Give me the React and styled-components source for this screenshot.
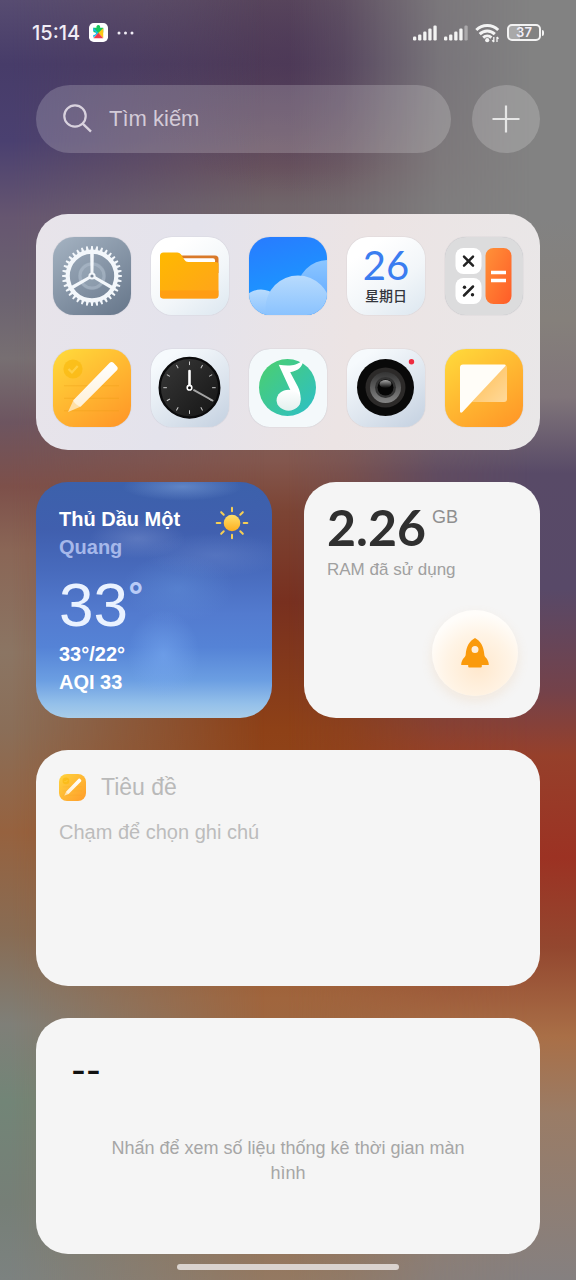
import React from "react";
import styled, { createGlobalStyle } from "styled-components";

const GlobalStyle = createGlobalStyle`
  * { box-sizing: border-box; }
  html { min-height: 100%; background: #7f6b62; }
  body { margin: 0; font-family: "Liberation Sans", "Noto Sans", "Noto Sans CJK SC", sans-serif; }
  button { font: inherit; color: inherit; border: 0; padding: 0; background: none; cursor: pointer; }
  svg { display: block; }
`;

const Screen = styled.div`
  position: relative;
  isolation: isolate;
  overflow: hidden;
  min-height: 100vh;
  display: flex;
  flex-direction: column;
  padding: 0 36px;
  background:
    radial-gradient(ellipse 30% 10% at 52% 5%, rgba(75, 54, 86, 0.6), rgba(75, 54, 86, 0)),
    linear-gradient(#5c4a5e 0, #503d59 5%, #6a545e 13%, #70656a 16%, #7c6462 30%, #83574e 36%,
      #7c4434 40%, #78301f 47%, #8e4117 57%, #93481c 66%, #a0653d 78%, #986c4a 88%, #947962 100%);
`;

const SideTint = styled.div`
  position: absolute;
  inset: 0;
  z-index: -1;
  background: ${(p) =>
    p.$right
      ? `linear-gradient(#828282 0, #828282 17%, #85807b 25%, #80757a 31%, #584a67 37%, #584968 46%,
         #74424a 54%, #96402b 59%, #9c3223 67%, #93472f 74%, #a96f47 81%, #9a7c66 87%, #858080 100%)`
      : `linear-gradient(#574c71 0, #473c69 5%, #4a4070 11%, #665670 17%, #6b6270 23%, #776f72 28%,
         #6d5560 33%, #7d504a 38%, #8a6656 43%, #8b7563 51%, #8a6e58 57%, #96623f 65%, #886c54 73%,
         #7f7f78 80%, #728577 86%, #767f77 94%, #7c8280 100%)`};
  mask-image: ${(p) =>
    p.$right
      ? "linear-gradient(to left, #000 8%, rgba(0, 0, 0, 0.8) 24%, rgba(0, 0, 0, 0.2) 40%, transparent 50%)"
      : "linear-gradient(to right, #000 2%, transparent 46%)"};
`;

const StatusBar = styled.header`
  display: flex;
  align-items: center;
  justify-content: space-between;
  height: 65px;
  margin: 0 -4px;
  color: #f1edf6;
  font-family: Inter, sans-serif;
`;

const StatusGroup = styled.div`
  display: flex;
  align-items: center;
  gap: ${(p) => p.$gap}px;
`;

const Clock = styled.time`
  font-size: 20px;
  font-weight: 500;
  line-height: 24px;
`;

const SearchRow = styled.form`
  display: flex;
  gap: 21px;
  margin: 20px 0 61px;
`;

const SearchBox = styled.label`
  flex: 1;
  min-width: 0;
  height: 68px;
  display: flex;
  align-items: center;
  gap: 16px;
  padding: 0 27px;
  border-radius: 34px;
  background: rgba(255, 255, 255, 0.19);
  color: #d9d2de;
`;

const SearchInput = styled.input`
  flex: 1;
  min-width: 0;
  border: 0;
  outline: 0;
  padding: 0;
  background: none;
  font: 400 22px/28px "Liberation Sans", "Noto Sans", sans-serif;
  color: inherit;
  &::placeholder { color: #d3cbd8; opacity: 1; }
`;

const AddButton = styled.button`
  width: 68px;
  height: 68px;
  display: grid;
  place-items: center;
  border-radius: 50%;
  background: rgba(255, 255, 255, 0.19);
`;

const Widgets = styled.main`
  display: flex;
  flex-direction: column;
  gap: 32px;
`;

const AppPanel = styled.nav`
  display: grid;
  grid-template-columns: repeat(5, 78px);
  justify-content: space-between;
  row-gap: 34px;
  padding: 23px 17px;
  border-radius: 32px;
  background: linear-gradient(100deg, #e8e4ea 0, #e4e3ec 30%, #ece4e4 62%, #e9e7e8 100%);
`;

const AppTile = styled.button`
  width: 78px;
  height: 78px;
  overflow: hidden;
  border-radius: 21px;
  background: ${(p) => p.$bg};
  box-shadow: 0 0 1px rgba(70, 80, 100, 0.35);
`;

const CalendarFace = styled.span`
  height: 100%;
  display: flex;
  flex-direction: column;
  align-items: center;
  padding-top: 8px;
`;

const CalendarDay = styled.span`
  font: 400 40px/40px Lato, sans-serif;
  color: #3a7df0;
`;

const CalendarWeekday = styled.span`
  font: 500 14px/20px "Noto Sans CJK SC", sans-serif;
  color: #34373d;
`;

const Pair = styled.div`
  display: grid;
  grid-template-columns: 1fr 1fr;
  gap: 32px;
`;

const Card = styled.button`
  display: flex;
  flex-direction: column;
  width: 100%;
  min-height: 236px;
  padding: 23px 23px 22px;
  border-radius: 32px;
  background: #f5f5f5;
  text-align: left;
`;

const WeatherCard = styled(Card)`
  color: #fff;
  background:
    radial-gradient(ellipse 36px 44px at 54% 73%, rgba(125, 175, 245, 0.5), transparent),
    radial-gradient(ellipse 56px 34px at 60% 45%, rgba(105, 155, 225, 0.35), transparent),
    radial-gradient(ellipse 60px 14px at 62% 2%, rgba(150, 185, 235, 0.4), transparent),
    radial-gradient(ellipse 48px 20px at 43% 24%, rgba(150, 170, 220, 0.3), transparent),
    radial-gradient(ellipse 70px 22px at 76% 31%, rgba(130, 155, 215, 0.25), transparent),
    linear-gradient(#3c61ab 0, #405fae 20%, #486bbd 38%, #537bcf 56%, #5583d6 70%, #6b9ee2 84%, #94c0ea 94%, #a9cde9 100%);
`;

const WeatherTop = styled.span`
  display: flex;
  justify-content: space-between;
`;

const Stack = styled.span`
  display: flex;
  flex-direction: column;
`;

const WeatherLine = styled.span`
  font-size: 20px;
  font-weight: 700;
  line-height: 28px;
  color: ${(p) => (p.$muted ? "#a6b8ea" : "#fff")};
`;

const Temperature = styled.span`
  display: flex;
  margin: 12px 0 3px;
  font-size: 62px;
  line-height: 64px;
  color: #eaf2ff;
`;

const Degree = styled.span`
  font: 600 34px/44px Inter, sans-serif;
  color: #b9cbf6;
`;

const RamTop = styled.span`
  display: flex;
  gap: 6px;
  height: 53px;
`;

const RamValue = styled.span`
  font: 700 50px/44px Lato, sans-serif;
  color: #303030;
`;

const RamUnit = styled.span`
  font-size: 18px;
  line-height: 24px;
  color: #8f8f8f;
`;

const RamLabel = styled.span`
  font-size: 17px;
  line-height: 24px;
  color: #a0a0a0;
`;

const BoostDisc = styled.span`
  width: 86px;
  height: 86px;
  display: grid;
  place-items: center;
  align-self: flex-end;
  margin: auto 0 0;
  border-radius: 50%;
  background: radial-gradient(circle at 54% 66%, #ffe8cd 0, #fff4e6 45%, #fffdfa 72%);
  box-shadow: 0 5px 12px rgba(230, 165, 100, 0.16);
`;

const RamCard = styled(Card)`
  padding-right: 22px;
`;

const NoteHeader = styled.span`
  display: flex;
  align-items: center;
  gap: 15px;
  height: 28px;
  margin-bottom: 17px;
  font-size: 23px;
  color: #b9b9b9;
`;

const NoteHint = styled.span`
  font-size: 20px;
  line-height: 28px;
  color: #bcbcbc;
`;

const MiniIcon = styled.span`
  width: 27px;
  height: 27px;
  overflow: hidden;
  border-radius: 8px;
  background: linear-gradient(135deg, #ffd43d, #ff9c2b);
`;

const UsageCard = styled(Card)`
  padding: 35px;
`;

const UsageTime = styled.span`
  height: 83px;
  font: 600 32px/36px Inter, sans-serif;
  color: #111;
`;

const UsageHint = styled.span`
  align-self: center;
  max-width: 380px;
  font-size: 18px;
  line-height: 25px;
  text-align: center;
  color: #a6a6a6;
`;

const HomeBar = styled.div`
  align-self: center;
  width: 222px;
  height: 6px;
  margin: 10px 0;
  border-radius: 3px;
  background: #dad3cf;
`;

const Icon = ({ size = 78, h, box = "0 0 78 78", children }) => (
  <svg width={size} height={h || size} viewBox={box} fill="none" aria-hidden="true">
    {children}
  </svg>
);

const Grad = ({ id, from, to, vertical }) => (
  <linearGradient id={id} x1="0" y1="0" x2={vertical ? "0" : "1"} y2="1">
    <stop stopColor={from} />
    <stop offset="1" stopColor={to} />
  </linearGradient>
);

const spin = (count, cx, cy, draw) =>
  Array.from({ length: count }, (_, i) => (
    <g key={i} transform={`rotate(${(i * 360) / count} ${cx} ${cy})`}>{draw}</g>
  ));

const SettingsIcon = () => (
  <Icon>
    <circle cx="39" cy="39" r="14" fill="#a9b8c8" opacity=".3" />
    <circle cx="39" cy="39" r="12" stroke="#b9c6d4" strokeWidth="3" opacity=".4" />
    <circle cx="39" cy="39" r="24.3" stroke="#f3f7fb" strokeWidth="4.2" />
    {spin(36, 39, 39, <path d="M37.500 14l.7-5h1.600l.7 5z" fill="#f3f7fb" />)}
    {spin(3, 39, 39, <path d="M37.600 39L37.200 16h3.600l-.4 23z" fill="#f3f7fb" />)}
    <circle cx="39" cy="39" r="3.600" fill="#f3f7fb" />
    <circle cx="39" cy="39" r="1.600" fill="#7b899a" />
  </Icon>
);

const FolderIcon = () => (
  <Icon>
    <defs><Grad id="folder" from="#ffb900" to="#ffa31c" /></defs>
    <path d="M29 18.500h35a3.500 3.500 0 0 1 3.500 3.500v14H29z" fill="#d9792a" />
    <path d="M30 21.300h32a2 2 0 0 1 2 2V30H32z" fill="#fff" />
    <path d="M9 19a3.500 3.500 0 0 1 3.500-3.500h13.800a5 5 0 0 1 3.600 1.800l3.500 5.400a4.500 4.500 0 0 0 3.800 2.200H65a2.500 2.500 0 0 1 2.500 2.500V58a3.500 3.500 0 0 1-3.500 3.500H12.500A3.500 3.500 0 0 1 9 58z" fill="url(#folder)" />
    <path d="M9 53.500h58.500V58a3.500 3.500 0 0 1-3.500 3.500H12.500A3.500 3.500 0 0 1 9 58z" fill="#ff9914" opacity=".75" />
  </Icon>
);

const SkyIcon = () => (
  <Icon>
    <defs>
      <Grad id="cloudBack" from="#8cc6ff" to="#4f9dff" vertical />
      <Grad id="cloudFront" from="#b8dbfd" to="#6db3ff" vertical />
    </defs>
    <circle cx="79" cy="54" r="31" fill="url(#cloudBack)" />
    <circle cx="12" cy="73" r="20.500" fill="url(#cloudFront)" />
    <circle cx="49" cy="71" r="32.500" fill="url(#cloudFront)" />
  </Icon>
);

const CalculatorIcon = () => (
  <Icon>
    <defs><Grad id="calc" from="#ff9238" to="#ff5c28" /></defs>
    <rect x="10.500" y="11" width="26" height="26" rx="8" fill="#fff" />
    <rect x="10.500" y="41" width="26" height="26" rx="8" fill="#fff" />
    <rect x="40.500" y="11" width="26" height="56" rx="8" fill="url(#calc)" />
    <path d="M19 19.700l9 9m0-9l-9 9M19 58.500l9-9" stroke="#222" strokeWidth="2.500" strokeLinecap="round" />
    <circle cx="19.500" cy="50.300" r="1.700" fill="#222" />
    <circle cx="27.500" cy="57.800" r="1.700" fill="#222" />
    <path d="M46 35.500h15M46 43.500h15" stroke="#fff" strokeWidth="3.400" />
  </Icon>
);

const NotesIcon = ({ size, id = "pencil" }) => (
  <Icon size={size}>
    <defs><Grad id={id} from="#ffffff" to="#fff1d8" vertical /></defs>
    <circle cx="20" cy="20" r="9.600" fill="#f9b90c" opacity=".65" />
    <path d="M15.500 20l3.400 3.400 5.800-6.400" stroke="#ffcf45" strokeWidth="2.200" />
    <path d="M11 36.800h55M11 49.300h55M11 61.800h55" stroke="#e99a10" strokeWidth="1" opacity=".35" />
    <path d="M15 63l5.500-12 7.500 6.500z" fill="#ffe0a8" />
    <path d="M20.300 51.300L56.500 14a3 3 0 0 1 4.200 0l3 3.200a3 3 0 0 1 0 4.200L27.800 57.600c-2.300-.2-6.800-3.500-7.500-6.300z" fill={`url(#${id})`} />
  </Icon>
);

const ClockIcon = () => (
  <Icon>
    <defs><Grad id="dial" from="#383838" to="#151515" /></defs>
    <circle cx="38.500" cy="38.700" r="29.800" fill="url(#dial)" stroke="#0b0b0c" strokeWidth="2.400" />
    {spin(12, 38.5, 38.7, <path d="M38.500 12.500v3.600" stroke="#c9c9c9" strokeWidth="1" />)}
    <path d="M38.500 22v14" stroke="#fff" strokeWidth="2.600" strokeLinecap="round" />
    <path d="M43 41.200L61.500 51.500" stroke="#a5a5a5" strokeWidth="2" strokeLinecap="round" />
    <circle cx="38.500" cy="38.700" r="2.300" stroke="#fff" strokeWidth="1.600" fill="#111" />
  </Icon>
);

const MusicIcon = () => (
  <Icon>
    <defs>
      <Grad id="disc" from="#4ccf6c" to="#2cbfc9" />
      <Grad id="noteHead" from="#ffffff" to="#e3f0ee" vertical />
    </defs>
    <circle cx="38.500" cy="38.500" r="28.500" fill="url(#disc)" />
    <path d="M29.700 15.800c6.500 1 12.500 1.200 16.800-.3 3.500-1.100 5.500-2.600 7.300-5 .4 7.500-4.300 11-12.600 12.700l7.600 14.300c2 4 3 8 2.800 13.200L39 51l2.300-10z" fill="#fff" />
    <ellipse cx="39.600" cy="51.200" rx="12" ry="10.500" fill="url(#noteHead)" />
  </Icon>
);

const CameraIcon = () => (
  <Icon>
    <defs>
      <Grad id="ring" from="#343434" to="#858585" vertical />
      <Grad id="lens" from="#d0d0d0" to="#060606" vertical />
    </defs>
    <circle cx="38.500" cy="38.500" r="28.500" fill="#090909" />
    <circle cx="38.500" cy="38.500" r="20" fill="#2c2a29" />
    <circle cx="38.500" cy="38.500" r="15.500" fill="url(#ring)" />
    <circle cx="38.500" cy="38.500" r="10.500" fill="#333" />
    <circle cx="38.500" cy="38.500" r="8" fill="#050505" />
    <ellipse cx="38.500" cy="35" rx="6" ry="4" fill="url(#lens)" opacity=".8" />
    <circle cx="64.500" cy="12.700" r="2.700" fill="#ee2b3f" />
  </Icon>
);

const MemoIcon = () => (
  <Icon>
    <defs><Grad id="memo" from="#ffbd50" to="#ffd99a" /></defs>
    <path d="M60.500 16a3 3 0 0 1 1.500 2.500V50a3 3 0 0 1-3 3H27z" fill="url(#memo)" />
    <path d="M15 18.500a3 3 0 0 1 3-3h41.500c1.300 0 1.500.8.700 1.700L17.500 63c-1.300 1.300-2.500.8-2.500-.7z" fill="#fffdf8" />
  </Icon>
);

const CalendarIcon = () => (
  <CalendarFace>
    <CalendarDay>26</CalendarDay>
    <CalendarWeekday>星期日</CalendarWeekday>
  </CalendarFace>
);

const pale = "linear-gradient(145deg, #ffffff 20%, #f2f6f9 60%, #dce7f0)";
const silver = "linear-gradient(145deg, #f6fafd 15%, #dde5ee 60%, #c3d0e0)";
const amber = "linear-gradient(145deg, #ffd83a 5%, #ffb731 50%, #ff9426)";

const apps = [
  { name: "Cài đặt", bg: "linear-gradient(145deg, #a5b3c2, #66768a)", Art: SettingsIcon },
  { name: "Tệp", bg: pale, Art: FolderIcon },
  { name: "Thời tiết", bg: "linear-gradient(165deg, #287bff, #1d93ff 60%)", Art: SkyIcon },
  { name: "Lịch", bg: pale, Art: CalendarIcon },
  { name: "Máy tính", bg: "#dcdcdd", Art: CalculatorIcon },
  { name: "Ghi chú", bg: amber, Art: NotesIcon },
  { name: "Đồng hồ", bg: silver, Art: ClockIcon },
  { name: "Nhạc", bg: "#f4f9fb", Art: MusicIcon },
  { name: "Máy ảnh", bg: silver, Art: CameraIcon },
  { name: "Ghi nhớ", bg: amber, Art: MemoIcon },
];

const PuzzleBadge = () => (
  <Icon size={19} box="0 0 20 20">
    <rect width="20" height="20" rx="5" fill="#fff" />
    <path d="M4.500 5H8a2 2 0 1 1 3.600 0H15v5l-5 1-5.500-1.500a1.700 1.700 0 0 0 0-2z" fill="#16c75b" />
    <path d="M4.500 4.800L10 10.500l-5.500 5v-3.200a2 2 0 1 0 0-3.600z" fill="#15b8ee" />
    <path d="M15 5.200v10.500l-5.300-5.200z" fill="#fbc516" />
    <path d="M4.800 16l5-5.700L15 16z" fill="#f23c4b" />
  </Icon>
);

const Signal = ({ weak }) => (
  <Icon size={24} h={16} box="0 0 24 16">
    {[4, 6, 9, 12, 15].map((h, i) => (
      <rect key={h} x={i * 5.1} y={15.5 - h} width="3.300" height={h} rx="1.200" fill="#f3f3f3" opacity={weak && i === 4 ? 0.4 : 1} />
    ))}
  </Icon>
);

const Wifi = () => (
  <Icon size={25} h={20} box="0 0 25 20">
    <path d="M1.300 7a15.500 15.500 0 0 1 21.900 0M4.700 11.100a10.700 10.700 0 0 1 15.100 0M8.200 14.600a6 6 0 0 1 8.200 0" stroke="#f3f3f3" strokeWidth="2.900" />
    <circle cx="12.200" cy="17.200" r="2.100" fill="#f3f3f3" />
    <path d="M18.800 14v5m-1.600-1.700l1.600 1.700M22 19v-5m0 0l1.500 1.700" stroke="#f3f3f3" strokeWidth="1.300" />
  </Icon>
);

const BatteryShell = styled.span`
  display: flex;
  align-items: center;
  gap: 1px;
  &::after { content: ""; width: 2px; height: 6px; border-radius: 0 2px 2px 0; background: #f3f3f3; }
`;

const BatteryLevel = styled.span`
  width: 34px;
  height: 17px;
  border: 2px solid #f3f3f3;
  border-radius: 5px;
  background: linear-gradient(to right, #a9a9a9 37%, transparent 37%);
  font-size: 13px;
  font-weight: 600;
  line-height: 13px;
  text-align: center;
`;

const SunIcon = () => (
  <Icon size={34} box="0 0 34 34">
    <defs><Grad id="sun" from="#ffe06b" to="#fdae1f" vertical /></defs>
    <circle cx="17" cy="17" r="8.300" fill="url(#sun)" />
    {spin(8, 17, 17, <path d="M17 1.700v3.600" stroke="#f6cf55" strokeWidth="2" strokeLinecap="round" />)}
  </Icon>
);

const SunSlot = styled.span`
  padding: 1px 0;
`;

const RocketIcon = () => (
  <Icon size={28} h={30} box="0 0 28 30">
    <path fillRule="evenodd" d="M14 0c5.200 2.800 8.700 8 9.300 16.500.1 1.200.4 2 1.400 3 2 2 3.100 4.500 3.100 7.500h-7v1.600a1 1 0 0 1-1 1H8.200a1 1 0 0 1-1-1V27h-7c0-3 1.100-5.500 3.100-7.500 1-1 1.300-1.800 1.400-3C5.300 8 8.800 2.800 14 0zm0 8a3.500 3.500 0 1 0 0 7 3.500 3.500 0 0 0 0-7z" fill="#fa9a0c" />
  </Icon>
);

export default function App() {
  return (
    <Screen>
      <GlobalStyle />
      <SideTint />
      <SideTint $right />

      <StatusBar>
        <StatusGroup $gap={9}>
          <Clock>15:14</Clock>
          <PuzzleBadge />
          <Icon size={17} h={4} box="0 0 17 4">
            {[2, 8.5, 15].map((x) => <circle key={x} cx={x} cy="2" r="1.500" fill="#f1edf6" />)}
          </Icon>
        </StatusGroup>
        <StatusGroup $gap={7}>
          <Signal />
          <Signal weak />
          <Wifi />
          <BatteryShell><BatteryLevel>37</BatteryLevel></BatteryShell>
        </StatusGroup>
      </StatusBar>

      <SearchRow onSubmit={(e) => e.preventDefault()}>
        <SearchBox>
          <Icon size={30} box="0 0 30 30">
            <circle cx="12" cy="12" r="10.700" stroke="currentColor" strokeWidth="2.200" />
            <path d="M19.700 19.700l8.300 8" stroke="currentColor" strokeWidth="2.400" />
          </Icon>
          <SearchInput type="search" aria-label="Tìm kiếm" placeholder="Tìm kiếm" />
        </SearchBox>
        <AddButton type="button" aria-label="Thêm">
          <Icon size={28} box="0 0 28 28">
            <path d="M14 .5v27M.5 14h27" stroke="#e6e6e6" strokeWidth="2.200" />
          </Icon>
        </AddButton>
      </SearchRow>

      <Widgets>
        <AppPanel>
          {apps.map(({ name, bg, Art }) => (
            <AppTile key={name} $bg={bg} type="button" aria-label={name}>
              <Art />
            </AppTile>
          ))}
        </AppPanel>

        <Pair>
          <WeatherCard type="button">
            <WeatherTop>
              <Stack>
                <WeatherLine>Thủ Dầu Một</WeatherLine>
                <WeatherLine $muted>Quang</WeatherLine>
              </Stack>
              <SunSlot><SunIcon /></SunSlot>
            </WeatherTop>
            <Temperature>33<Degree>°</Degree></Temperature>
            <WeatherLine>33°/22°</WeatherLine>
            <WeatherLine>AQI 33</WeatherLine>
          </WeatherCard>

          <RamCard type="button">
            <RamTop>
              <RamValue>2.26</RamValue>
              <RamUnit>GB</RamUnit>
            </RamTop>
            <RamLabel>RAM đã sử dụng</RamLabel>
            <BoostDisc><RocketIcon /></BoostDisc>
          </RamCard>
        </Pair>

        <Card type="button">
          <NoteHeader>
            <MiniIcon><NotesIcon size={27} id="miniPencil" /></MiniIcon>
            Tiêu đề
          </NoteHeader>
          <NoteHint>Chạm để chọn ghi chú</NoteHint>
        </Card>

        <UsageCard type="button">
          <UsageTime>--</UsageTime>
          <UsageHint>Nhấn để xem số liệu thống kê thời gian màn hình</UsageHint>
        </UsageCard>
      </Widgets>

      <HomeBar />
    </Screen>
  );
}
